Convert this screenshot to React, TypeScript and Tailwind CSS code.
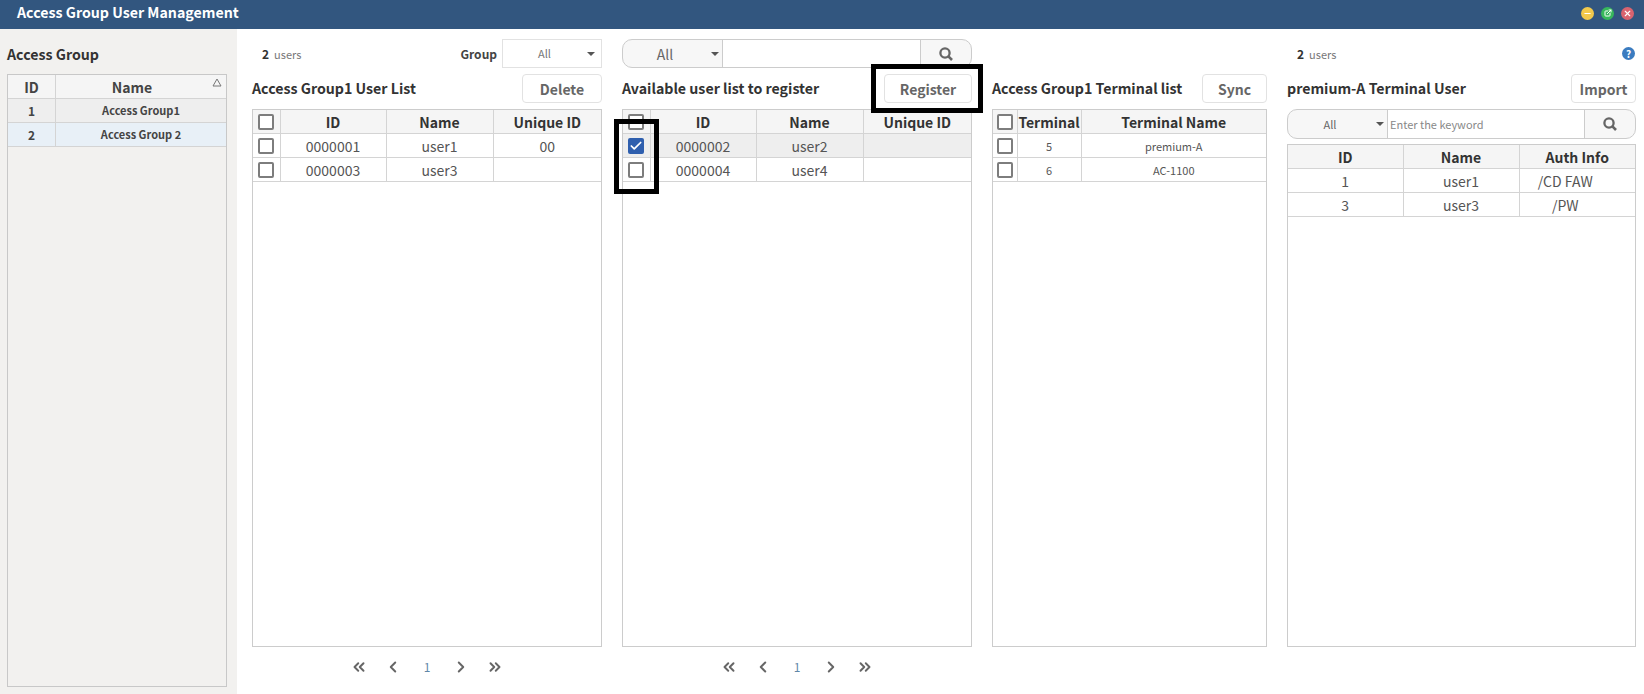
import { ChevronLeft, ChevronRight, ChevronsLeft, ChevronsRight, Check, ExternalLink, Minus, X } from "lucide-react";
import type { ReactNode } from "react";

interface Column {
  label: ReactNode;
  width: number;
}

function Checkbox({ checked }: { checked?: boolean }) {
  if (checked) {
    return (
      <span className="mx-auto flex h-4 w-4 items-center justify-center rounded-[2px] bg-[#2f5fae]">
        <Check size={14} strokeWidth={3} className="text-white" />
      </span>
    );
  }
  return <span className="mx-auto block h-4 w-4 rounded-[2px] border-2 border-[#7d7d7d] bg-white" />;
}

function DataTable({
  columns,
  rows,
  rowClass = "text-sm",
  shaded,
}: {
  columns: Column[];
  rows: ReactNode[][];
  rowClass?: string;
  shaded?: number;
}) {
  return (
    <div className="min-h-0 flex-1 border border-[#cccccc] bg-white">
      <table className="table-fixed border-collapse">
        <colgroup>
          {columns.map((col, index) => (
            <col key={index} style={{ width: col.width }} />
          ))}
        </colgroup>
        <thead>
          <tr className="h-[23px] bg-[#f5f5f5] text-sm leading-none font-bold text-[#333333]">
            {columns.map((col, index) => (
              <th key={index} className="border-r border-b border-[#d4d4d4] p-0 pt-[1px] last:border-r-0">
                {col.label}
              </th>
            ))}
          </tr>
        </thead>
        <tbody>
          {rows.map((row, r) => (
            <tr key={r} className={`h-6 leading-none text-[#555555] ${rowClass} ${shaded === r ? "bg-[#eeeeee]" : ""}`}>
              {row.map((cell, c) => (
                <td key={c} className="border-r border-b border-[#d4d4d4] p-0 pt-[2px] text-center last:border-r-0">
                  {cell}
                </td>
              ))}
            </tr>
          ))}
        </tbody>
      </table>
    </div>
  );
}

function Caret() {
  return <span className="ml-[4px] h-0 w-0 border-x-[4px] border-t-[4px] border-x-transparent border-t-[#555555]" />;
}

function SearchGlyph() {
  return (
    <svg width="14" height="14" viewBox="0 0 14 14" fill="none" stroke="#666666">
      <circle cx="6" cy="6" r="4.6" strokeWidth="2.3" />
      <path d="M9.4 9.4 L13 13" strokeWidth="2.6" />
    </svg>
  );
}

function SearchBar({ placeholder, small }: { placeholder?: string; small?: boolean }) {
  return (
    <div className={`flex items-stretch rounded-[10px] border border-[#cccccc] bg-[#f7f7f7] ${small ? "h-[30px]" : "h-[29px]"}`}>
      <div className="flex w-[100px] shrink-0 items-center border-r border-[#cccccc]">
        <span className={`w-[84px] text-center text-[#666666] ${small ? "text-[11px]" : "text-sm"}`}>All</span>
        <Caret />
      </div>
      <div className="flex flex-1 items-center bg-white pl-[2px] text-[11px] text-[#888888]">{placeholder}</div>
      <div className="flex w-[51px] items-center justify-center border-l border-[#cccccc]">
        <SearchGlyph />
      </div>
    </div>
  );
}

function Title({ title, action, actionWidth }: { title: string; action: string; actionWidth: string }) {
  return (
    <div className="my-[6px] flex h-[29px] items-center justify-between">
      <h2 className="pt-[1px] text-[14.2px] font-bold text-[#333333]">{title}</h2>
      <button className={`h-[29px] rounded-[4px] border border-[#e2e2e2] bg-white text-sm font-bold text-[#666666] ${actionWidth}`}>
        {action}
      </button>
    </div>
  );
}

function Pagination() {
  return (
    <div className="flex h-[47px] items-center justify-center gap-[16px] pb-[8px] text-[#666666]">
      <ChevronsLeft size={18} strokeWidth={2.6} />
      <ChevronLeft size={18} strokeWidth={2.6} />
      <span className="w-[18px] text-center text-xs text-[#5f87a8]">1</span>
      <ChevronRight size={18} strokeWidth={2.6} />
      <ChevronsRight size={18} strokeWidth={2.6} />
    </div>
  );
}

function UserCount() {
  return (
    <span className="mt-[1px] text-[11px] text-[#777777]">
      <b className="mr-[5px] text-xs font-bold text-[#333333]">2</b>users
    </span>
  );
}

export default function App() {
  return (
    <div
      className="flex h-[694px] w-[1644px] flex-col overflow-hidden bg-white"
      style={{ fontFamily: '"Noto Sans CJK KR", "Noto Sans", sans-serif' }}
    >
      {/* Title bar */}
      <header className="flex h-[29px] shrink-0 items-center justify-between bg-[#32567f] pr-[10px] pb-[3px] pl-[17px]">
        <h1 className="text-[14.2px] font-bold text-white">Access Group User Management</h1>
        <div className="flex gap-[7px]">
          <span className="flex h-[13px] w-[13px] items-center justify-center rounded-full bg-[#f2c94c]">
            <Minus size={9} strokeWidth={3} className="text-white" />
          </span>
          <span className="flex h-[13px] w-[13px] items-center justify-center rounded-full bg-[#37b85c]">
            <ExternalLink size={8} strokeWidth={3} className="text-white" />
          </span>
          <span className="flex h-[13px] w-[13px] items-center justify-center rounded-full bg-[#d9636f]">
            <X size={9} strokeWidth={3} className="text-white" />
          </span>
        </div>
      </header>

      <div className="flex min-h-0 flex-1">
        {/* Access group sidebar */}
        <aside className="flex w-[237px] shrink-0 flex-col bg-[#f2f1ef] pt-[15px] pr-[10px] pb-[7px] pl-[7px]">
          <h2 className="mb-[10px] h-5 text-[14.2px] leading-5 font-bold text-[#333333]">Access Group</h2>
          <div className="relative min-h-0 flex-1 border border-[#c8c8c8]">
            <svg className="absolute top-[3px] right-[4px]" width="10" height="9" viewBox="0 0 10 9">
              <path d="M5 1 L9 8 L1 8 Z" fill="none" stroke="#777777" strokeWidth="1" />
            </svg>
            <div className="grid h-6 grid-cols-[48px_1fr] border-b border-[#d4d4d4] bg-[#f5f5f5] text-sm font-bold text-[#444444]">
              <div className="flex items-center justify-center border-r border-[#d4d4d4]">ID</div>
              <div className="flex items-center justify-center pr-[18px]">Name</div>
            </div>
            <div className="grid h-6 grid-cols-[48px_1fr] border-b border-[#d4d4d4] bg-[#eeeeee] text-[11px] font-bold text-[#444444]">
              <div className="flex items-center justify-center border-r border-[#d4d4d4] text-xs">1</div>
              <div className="flex items-center justify-center">Access Group1</div>
            </div>
            <div className="grid h-6 grid-cols-[48px_1fr] border-b border-[#d4d4d4] bg-[#e8f0f7] text-[11px] font-bold text-[#444444]">
              <div className="flex items-center justify-center border-r border-[#d4d4d4] text-xs">2</div>
              <div className="flex items-center justify-center">Access Group 2</div>
            </div>
          </div>
        </aside>

        <main className="flex min-w-0 flex-1 gap-5 pl-[15px]">
          {/* Registered users */}
          <section className="flex w-[350px] shrink-0 flex-col pt-[10px]">
            <div className="flex h-[29px] items-center justify-between pl-[10px]">
              <UserCount />
              <div className="flex items-center gap-[5px]">
                <span className="mt-[1px] text-xs font-bold text-[#444444]">Group</span>
                <div className="flex h-[29px] w-[100px] items-center border border-[#e2e2e2] pr-[6px] pl-[35px]">
                  <span className="flex-1 text-[11px] text-[#777777]">All</span>
                  <Caret />
                </div>
              </div>
            </div>
            <Title title="Access Group1 User List" action="Delete" actionWidth="w-[80px]" />
            <DataTable
              columns={[
                { label: <Checkbox />, width: 27 },
                { label: "ID", width: 106 },
                { label: "Name", width: 107 },
                { label: "Unique ID", width: 108 },
              ]}
              rows={[
                [<Checkbox />, "0000001", "user1", "00"],
                [<Checkbox />, "0000003", "user3", ""],
              ]}
            />
            <Pagination />
          </section>

          {/* Available users */}
          <section className="relative flex w-[350px] shrink-0 flex-col pt-[10px]">
            <SearchBar />
            <Title title="Available user list to register" action="Register" actionWidth="w-[88px]" />
            <DataTable
              columns={[
                { label: <Checkbox />, width: 27 },
                { label: "ID", width: 106 },
                { label: "Name", width: 107 },
                { label: "Unique ID", width: 108 },
              ]}
              rows={[
                [<Checkbox checked />, "0000002", "user2", ""],
                [<Checkbox />, "0000004", "user4", ""],
              ]}
              shaded={0}
            />
            <Pagination />
            {/* Annotation boxes drawn over the screenshot */}
            <div className="pointer-events-none absolute top-[35px] left-[249px] h-[49px] w-[112px] border-[5px] border-black" />
            <div className="pointer-events-none absolute top-[90px] left-[-8px] h-[75px] w-[45px] border-[5px] border-black" />
          </section>

          {/* Terminals */}
          <section className="flex w-[275px] shrink-0 flex-col pt-[39px] pb-[47px]">
            <Title title="Access Group1 Terminal list" action="Sync" actionWidth="w-[65px]" />
            <DataTable
              columns={[
                { label: <Checkbox />, width: 24 },
                { label: "Terminal", width: 64 },
                { label: "Terminal Name", width: 185 },
              ]}
              rows={[
                [<Checkbox />, "5", "premium-A"],
                [<Checkbox />, "6", "AC-1100"],
              ]}
              rowClass="text-[11px]"
            />
          </section>

          {/* Terminal users */}
          <section className="relative flex w-[349px] shrink-0 flex-col pt-[10px] pb-[47px]">
            <div className="flex h-[29px] items-center pl-[10px]">
              <UserCount />
              <span className="absolute top-[18px] right-[1px] flex h-[13px] w-[13px] items-center justify-center rounded-full bg-[#3b7cc0] text-[10px] leading-none font-bold text-white">
                ?
              </span>
            </div>
            <Title title="premium-A Terminal User" action="Import" actionWidth="w-[65px]" />
            <div className="mb-[5px]">
              <SearchBar placeholder="Enter the keyword" small />
            </div>
            <DataTable
              columns={[
                { label: "ID", width: 115 },
                { label: "Name", width: 116 },
                { label: "Auth Info", width: 116 },
              ]}
              rows={[
                ["1", "user1", <span className="pr-[24px]">/CD FAW</span>],
                ["3", "user3", <span className="pr-[24px]">/PW</span>],
              ]}
            />
          </section>
        </main>
      </div>
    </div>
  );
}
